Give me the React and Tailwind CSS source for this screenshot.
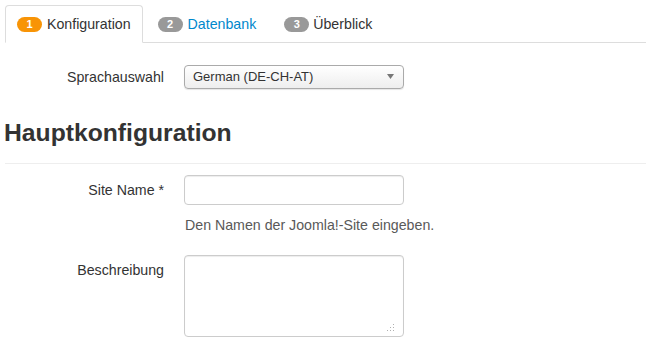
import React from "react";

function Badge({ n, color }) {
  return (
    <span
      className={`inline-flex h-[15px] w-[25px] items-center justify-center rounded-full text-[11px] font-bold leading-none text-white ${color}`}
    >
      {n}
    </span>
  );
}

export default function App() {
  return (
    <div
      className="h-[360px] w-[646px] overflow-hidden bg-white text-[14.2px] leading-[20px] text-[#333]"
      style={{ fontFamily: '"Liberation Sans", Arial, Helvetica, sans-serif' }}
    >
      <div className="pl-[5px] pt-[5px]">
        <ul className="flex border-b border-[#ddd]">
          <li className="-mb-px mr-[2px]">
            <span className="flex items-center gap-[5px] rounded-t-[4px] border border-[#ddd] border-b-transparent bg-white px-[11px] py-[8px]">
              <Badge n="1" color="bg-[#f89406]" />
              <span>Konfiguration</span>
            </span>
          </li>
          <li className="-mb-px mr-[2px]">
            <span className="flex items-center gap-[5px] border border-transparent px-[12px] py-[8px]">
              <Badge n="2" color="bg-[#999]" />
              <span className="text-[#0088cc]">Datenbank</span>
            </span>
          </li>
          <li className="-mb-px">
            <span className="flex items-center gap-[4px] border border-transparent px-[12px] py-[8px]">
              <Badge n="3" color="bg-[#999]" />
              <span>Überblick</span>
            </span>
          </li>
        </ul>
      </div>

      <div className="pl-[5px]">
        <div className="mt-[22px] flex items-center gap-[20px]">
          <label className="w-[159px] text-right">Sprachauswahl</label>
          <div className="relative flex h-[24px] w-[220px] items-center rounded-[4px] border border-[#aaa] bg-gradient-to-b from-white to-[#eeeeee] pl-[8px] text-[13px] text-[#333] shadow-[0_1px_1px_rgba(0,0,0,0.1)]">
            German (DE-CH-AT)
            <svg
              className="absolute right-[9px] top-[8px]"
              width="7"
              height="5"
              viewBox="0 0 7 5"
            >
              <polygon points="0,0 7,0 3.5,5" fill="#777" />
            </svg>
          </div>
        </div>

        <h3 className="mt-[24px] ml-[-1px] text-[24.7px] font-bold leading-[40px] text-[#333]">
          Hauptkonfiguration
        </h3>
        <hr className="mt-[10px] border-0 border-t border-[#eee]" />

        <div className="mt-[11px] flex gap-[20px]">
          <label className="w-[159px] pt-[5px] text-right">Site Name *</label>
          <div className="flex flex-col">
            <input
              type="text"
              className="h-[30px] w-[220px] rounded-[4px] border border-[#ccc] bg-white px-[6px] shadow-[inset_0_1px_1px_rgba(0,0,0,0.075)] outline-none"
            />
            <p className="mt-[10px] pl-[1px] text-[#595959]">
              Den Namen der Joomla!-Site eingeben.
            </p>
          </div>
        </div>

        <div className="mt-[20px] flex gap-[20px]">
          <label className="w-[159px] pt-[5px] text-right">Beschreibung</label>
          <div className="relative">
            <textarea className="block h-[82px] w-[220px] resize-none rounded-[4px] border border-[#ccc] bg-white px-[6px] shadow-[inset_0_1px_1px_rgba(0,0,0,0.075)] outline-none" />
            <svg
              className="absolute bottom-[5px] right-[9px]"
              width="9"
              height="9"
              viewBox="0 0 9 9"
            >
              <g fill="#b0b0b0">
                <rect x="7" y="1" width="1" height="1" />
                <rect x="7" y="4" width="1" height="1" />
                <rect x="4" y="4" width="1" height="1" />
                <rect x="7" y="7" width="1" height="1" />
                <rect x="4" y="7" width="1" height="1" />
                <rect x="1" y="7" width="1" height="1" />
              </g>
            </svg>
          </div>
        </div>
      </div>
    </div>
  );
}
